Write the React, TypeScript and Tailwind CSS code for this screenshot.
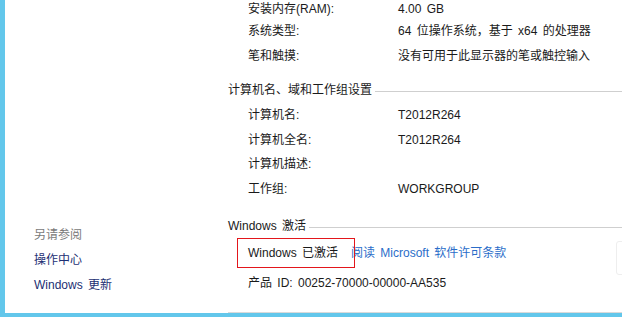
export default function App() {
  const sysRows = [
    { label: "安装内存(RAM):", value: "4.00 GB", h: "h-[18px]" },
    { label: "系统类型:", value: "64 位操作系统，基于 x64 的处理器", h: "h-[26px]" },
    { label: "笔和触摸:", value: "没有可用于此显示器的笔或触控输入", h: "h-[24px]" },
  ];
  const nameRows = [
    { label: "计算机名:", value: "T2012R264", h: "h-[25px]" },
    { label: "计算机全名:", value: "T2012R264", h: "h-[25px]" },
    { label: "计算机描述:", value: "", h: "h-[24px]" },
    { label: "工作组:", value: "WORKGROUP", h: "h-[25px]" },
  ];

  return (
    <div className="relative flex h-[317px] w-[622px] overflow-hidden border-b-[4px] border-l-[5px] border-[#63c7eb] bg-white text-[12px] leading-[16px] text-[#1a1a1a] [word-spacing:2px] font-['Liberation_Sans','Noto_Sans_CJK_SC',sans-serif]">
      <aside className="flex w-[223px] shrink-0 flex-col pt-[223px] pl-[29px]">
        <div className="flex h-[24px] items-center text-[#7a7a7a]">另请参阅</div>
        <div className="flex h-[25px] items-center text-[#1d2f73]">操作中心</div>
        <div className="flex h-[25px] items-center text-[#1d2f73]">Windows 更新</div>
      </aside>

      <main className="relative flex flex-1 flex-col border-b border-[#dadada]">
        {sysRows.map((r) => (
          <div key={r.label} className={`flex ${r.h} items-center pl-[20px]`}>
            <span className="w-[150px] shrink-0">{r.label}</span>
            <span>{r.value}</span>
          </div>
        ))}

        <div className="mt-[10px] flex h-[24px] items-center gap-[3px]">
          <span>计算机名、域和工作组设置</span>
          <div className="mt-[3px] h-px flex-1 bg-[#cfcfcf]" />
        </div>

        {nameRows.map((r) => (
          <div key={r.label} className={`flex ${r.h} items-center pl-[20px]`}>
            <span className="w-[150px] shrink-0">{r.label}</span>
            <span>{r.value}</span>
          </div>
        ))}

        <div className="mt-[13px] flex h-[24px] items-center gap-[3px]">
          <span>Windows 激活</span>
          <div className="mt-[3px] h-px flex-1 bg-[#cfcfcf]" />
        </div>

        <div className="relative flex h-[30px] items-center pl-[20px]">
          <span>Windows 已激活</span>
          <span className="ml-[13px] text-[#2a6dc9]">阅读 Microsoft 软件许可条款</span>
          <div className="absolute left-[9px] top-0 h-[30px] w-[118px] border border-[#e3161b]" />
        </div>

        <div className="mt-[3px] flex h-[24px] items-center pl-[20px]">
          产品 ID: 00252-70000-00000-AA535
        </div>

        <div className="absolute right-[-6px] top-[241px] h-[34px] w-[12px] rounded-[3px] border border-[#eeeeee]" />
      </main>
    </div>
  );
}
